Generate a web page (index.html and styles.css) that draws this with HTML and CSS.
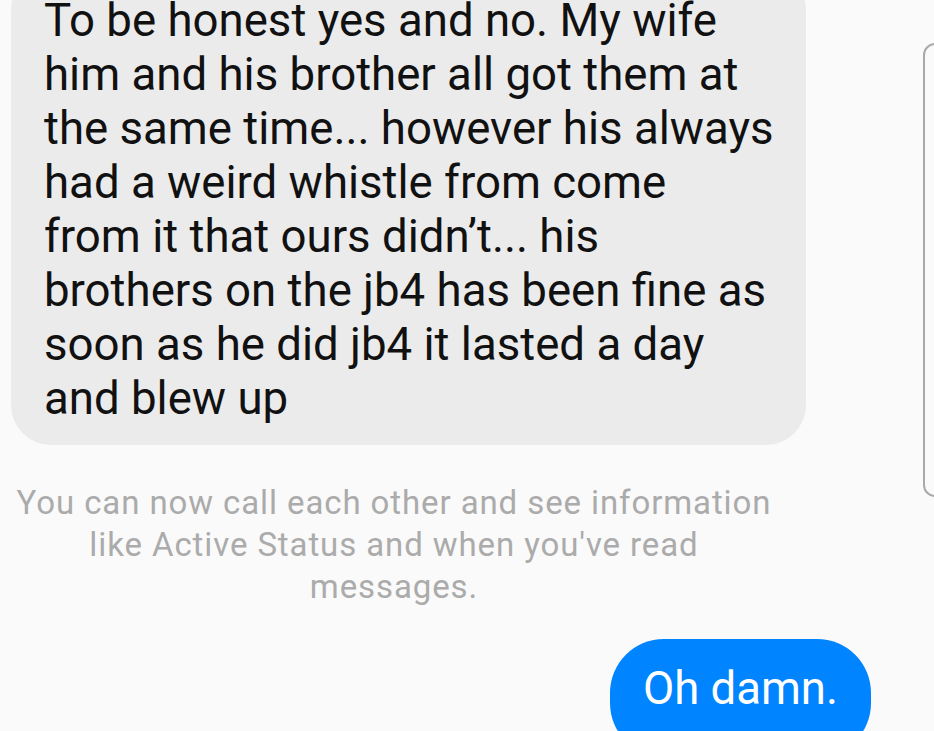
FILE: index.html
```html
<!DOCTYPE html>
<html>
<head>
<meta charset="utf-8">
<link rel="stylesheet" href="styles.css">
</head>
<body>
<div class="thread">
  <div class="bubble-in">
    <span class="line">To be honest yes and no. My wife</span>
    <span class="line">him and his brother all got them at</span>
    <span class="line">the same time... however his always</span>
    <span class="line">had a weird whistle from come</span>
    <span class="line">from it that ours didn’t... his</span>
    <span class="line">brothers on the jb4 has been fine as</span>
    <span class="line">soon as he did jb4 it lasted a day</span>
    <span class="line">and blew up</span>
  </div>
  <div class="notice">
    <span class="line">You can now call each other and see information</span>
    <span class="line">like Active Status and when you've read</span>
    <span class="line">messages.</span>
  </div>
  <div class="out-row">
    <div class="bubble-out">Oh damn.</div>
  </div>
</div>
<div class="edge-handle"></div>
</body>
</html>
```
FILE: styles.css
```css
html, body {
  margin: 0;
  padding: 0;
  background: #fafafa;
  overflow: hidden;
  height: 731px;
}
body {
  font-family: Roboto, "Noto Sans", sans-serif;
  position: relative;
}
.thread {
  display: flex;
  flex-direction: column;
}
.line {
  display: block;
  white-space: nowrap;
}
.bubble-in {
  margin-top: -30px;
  margin-left: 11px;
  width: 795px;
  box-sizing: border-box;
  padding: 24px 20px 19px 33px;
  background: #ebebeb;
  border-radius: 40px;
  color: #111;
  font-size: 45.6px;
  line-height: 54px;
}
.notice {
  width: 788px;
  margin-top: 37px;
  text-align: center;
  color: #ababab;
  font-size: 33px;
  letter-spacing: 0.9px;
  line-height: 42px;
}
.out-row {
  display: flex;
  justify-content: flex-end;
  width: 871px;
  margin-top: 31px;
}
.bubble-out {
  background: #0084ff;
  color: #fff;
  font-size: 45.5px;
  line-height: 56px;
  padding: 22px 33px 40px 33px;
  border-radius: 54px;
}
.edge-handle {
  position: absolute;
  left: 923px;
  top: 43px;
  width: 30px;
  height: 454px;
  border: 2px solid #a9a9a9;
  border-radius: 12px;
  box-sizing: border-box;
}
```
